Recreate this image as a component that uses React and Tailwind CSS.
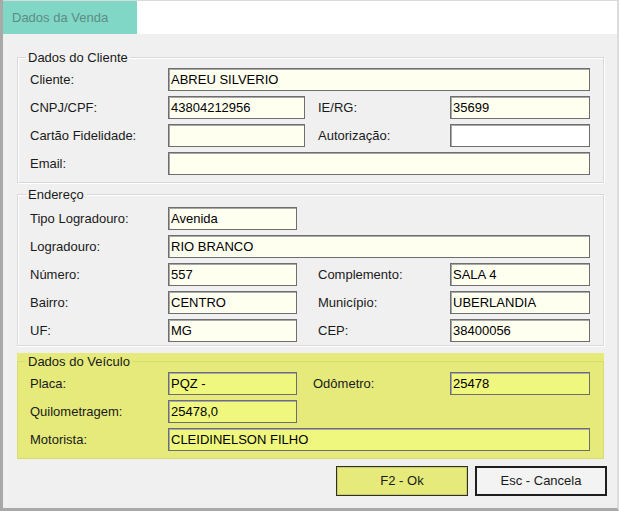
import React from 'react';

const inputBase = 'h-[23px] border border-[#6e6e6e] shadow-[inset_1px_1px_0_#a8a8a8] pl-[2px] flex items-center text-[13px] text-black whitespace-nowrap overflow-hidden';

function Field({ value = '', width, bg = 'bg-[#fffff0]' }) {
  return <div className={`${inputBase} ${bg} ${width}`}>{value}</div>;
}

function Label({ children }) {
  return <div className="h-[23px] flex items-center text-[13px] text-[#1a1a1a]">{children}</div>;
}

function Group({ title, children, className = '' }) {
  return (
    <fieldset className={`border border-[#d9d9d9] shadow-[1px_1px_0_#ffffff,inset_1px_1px_0_#ffffff] px-[8px] ${className}`}>
      <legend className="px-[2px] text-[13px] leading-[15px] text-[#1a1a1a]">{title}</legend>
      {children}
    </fieldset>
  );
}

export default function App() {
  const yellowInput = 'bg-[#eff77f]';

  return (
    <div
      className="w-[619px] h-[511px] flex flex-col bg-[#f0f0f0] border-l-[3px] border-l-[#a9a9a9] border-b-[3px] border-b-[#a9a9a9] border-r-2 border-r-[#dcdcdc] overflow-hidden"
      style={{ fontFamily: '"Liberation Sans", Arial, sans-serif' }}
    >
      {/* Tab strip */}
      <div className="h-[34px] flex border-t border-[#dadada] bg-white shrink-0">
        <div className="w-[134px] bg-[#80d7c5] flex items-center pl-[9px] text-[13px] text-[#5d8c83]">
          Dados da Venda
        </div>
        <div className="flex-1 bg-white" />
      </div>

      <div className="flex flex-col pl-[14px]">
        {/* Dados do Cliente */}
        <Group title="Dados do Cliente" className="mt-[16px] w-[587px] pb-[7px]">
          <div className="grid grid-cols-[138px_150px_132px_140px] gap-y-[5px] pl-[4px] pt-[3px]">
            <Label>Cliente:</Label>
            <div className="col-span-3"><Field value="ABREU SILVERIO" width="w-[422px]" /></div>

            <Label>CNPJ/CPF:</Label>
            <Field value="43804212956" width="w-[137px]" />
            <Label>IE/RG:</Label>
            <Field value="35699" width="w-[140px]" />

            <Label>Cartão Fidelidade:</Label>
            <Field width="w-[137px]" />
            <Label>Autorização:</Label>
            <Field width="w-[140px]" bg="bg-white" />

            <Label>Email:</Label>
            <div className="col-span-3"><Field width="w-[422px]" /></div>
          </div>
        </Group>

        {/* Endereço */}
        <Group title="Endereço" className="mt-[4px] w-[587px] pb-[3px]">
          <div className="grid grid-cols-[138px_150px_132px_140px] gap-y-[5px] pl-[4px] pt-[5px]">
            <Label>Tipo Logradouro:</Label>
            <div className="col-span-3"><Field value="Avenida" width="w-[129px]" /></div>

            <Label>Logradouro:</Label>
            <div className="col-span-3"><Field value="RIO BRANCO" width="w-[422px]" /></div>

            <Label>Número:</Label>
            <Field value="557" width="w-[129px]" />
            <Label>Complemento:</Label>
            <Field value="SALA 4" width="w-[140px]" />

            <Label>Bairro:</Label>
            <Field value="CENTRO" width="w-[129px]" />
            <Label>Município:</Label>
            <Field value="UBERLANDIA" width="w-[140px]" />

            <Label>UF:</Label>
            <Field value="MG" width="w-[129px]" />
            <Label>CEP:</Label>
            <Field value="38400056" width="w-[140px]" />
          </div>
        </Group>

        {/* Dados do Veículo */}
        <div className="mt-[7px] w-[587px] bg-[#e5ea7a] pt-[1px]">
          <fieldset className="border border-[#d7dc70] px-[8px] pb-[7px]">
            <legend className="px-[2px] text-[13px] leading-[15px] text-[#1a1a1a]">Dados do Veículo</legend>
            <div className="grid grid-cols-[138px_145px_137px_140px] gap-y-[5px] pl-[4px] pt-[3px]">
              <Label>Placa:</Label>
              <Field value="PQZ -" width="w-[129px]" bg={yellowInput} />
              <Label>Odômetro:</Label>
              <Field value="25478" width="w-[140px]" bg={yellowInput} />

              <Label>Quilometragem:</Label>
              <div className="col-span-3"><Field value="25478,0" width="w-[129px]" bg={yellowInput} /></div>

              <Label>Motorista:</Label>
              <div className="col-span-3"><Field value="CLEIDINELSON FILHO" width="w-[422px]" bg={yellowInput} /></div>
            </div>
          </fieldset>
        </div>

        {/* Buttons */}
        <div className="mt-[7px] flex justify-end gap-[7px] pr-[10px]">
          <button className="w-[132px] h-[30px] bg-[#e5ea7a] border border-[#2e2e2e] shadow-[inset_0_0_0_1px_#c9ce5e] text-[13px] text-[#1a1a1a]">
            F2 - Ok
          </button>
          <button className="w-[132px] h-[30px] bg-[#f3f3f3] border-2 border-[#1e1e1e] text-[13px] text-[#1a1a1a]">
            Esc - Cancela
          </button>
        </div>
      </div>
    </div>
  );
}
